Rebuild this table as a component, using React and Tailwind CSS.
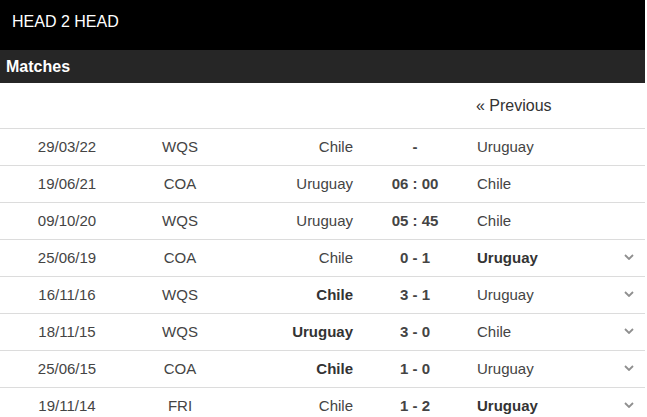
import React from "react";

const rows = [
  { d: "29/03/22", c: "WQS", h: "Chile", s: "-", a: "Uruguay", hb: false, ab: false, ch: false },
  { d: "19/06/21", c: "COA", h: "Uruguay", s: "06 : 00", a: "Chile", hb: false, ab: false, ch: false },
  { d: "09/10/20", c: "WQS", h: "Uruguay", s: "05 : 45", a: "Chile", hb: false, ab: false, ch: false },
  { d: "25/06/19", c: "COA", h: "Chile", s: "0 - 1", a: "Uruguay", hb: false, ab: true, ch: true },
  { d: "16/11/16", c: "WQS", h: "Chile", s: "3 - 1", a: "Uruguay", hb: true, ab: false, ch: true },
  { d: "18/11/15", c: "WQS", h: "Uruguay", s: "3 - 0", a: "Chile", hb: true, ab: false, ch: true },
  { d: "25/06/15", c: "COA", h: "Chile", s: "1 - 0", a: "Uruguay", hb: true, ab: false, ch: true },
  { d: "19/11/14", c: "FRI", h: "Chile", s: "1 - 2", a: "Uruguay", hb: false, ab: true, ch: true },
];

function Chevron() {
  return (
    <svg width="10" height="6" viewBox="0 0 10 6" fill="none">
      <path d="M1 1 L5 5 L9 1" stroke="#8f8f8f" strokeWidth="1.8" />
    </svg>
  );
}

export default function App() {
  return (
    <div className="w-[647px] h-[417px] overflow-hidden bg-white" style={{ fontFamily: '"Liberation Sans", Arial, sans-serif' }}>
      <div className="w-[645px]">
        <div className="h-[50px] bg-black flex items-center pl-[12px] text-white text-[16px] pb-[6px]">HEAD 2 HEAD</div>
        <div className="h-[33px] bg-[#262626] flex items-center pl-[6px] text-white text-[16px] font-bold">Matches</div>
        <div className="h-[45px] flex items-center pl-[476px] text-[16px] text-[#333] pt-[1px]">« Previous</div>
        {rows.map((r, i) => (
          <div key={i} className="h-[37px] border-t border-[#dcdcdc] flex items-center text-[15px] text-[#444]">
            <div className="w-[134px] text-center">{r.d}</div>
            <div className="w-[92px] text-center">{r.c}</div>
            <div className={`w-[127px] text-right ${r.hb ? "font-bold text-[#333]" : ""}`}>{r.h}</div>
            <div className="w-[124px] text-center font-bold text-[#444]">{r.s}</div>
            <div className={`w-[138px] ${r.ab ? "font-bold text-[#333]" : ""}`}>{r.a}</div>
            <div className="w-[27px] flex justify-center pb-[2px]">{r.ch ? <Chevron /> : null}</div>
          </div>
        ))}
      </div>
    </div>
  );
}
